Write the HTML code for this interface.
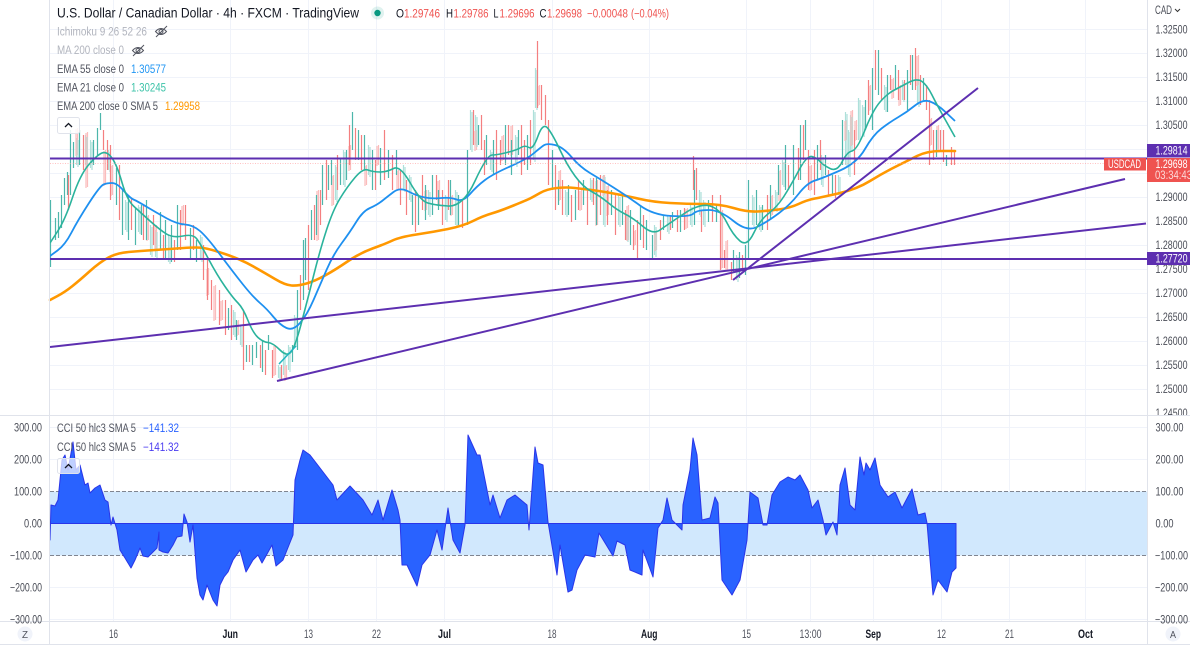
<!DOCTYPE html>
<html lang="en"><head><meta charset="utf-8"><title>USDCAD</title>
<style>
html,body{margin:0;padding:0;background:#fff}
svg{display:block}
text{font-family:"Liberation Sans",sans-serif;font-size:11.5px}
.a{fill:#4a4d57}
.t{fill:#222;text-anchor:middle}
.b{font-weight:bold;fill:#131722}
.l{fill:#50535e}
.g{fill:#b2b5be}
</style></head><body>
<svg width="1190" height="653" viewBox="0 0 1190 653" xmlns="http://www.w3.org/2000/svg">
<rect width="1190" height="653" fill="#fff"/>
<path stroke="#f0f3fa" fill="none" d="M50 29.5H1147M50 53.5H1147M50 77.5H1147M50 101.5H1147M50 125.5H1147M50 149.5H1147M50 173.5H1147M50 197.5H1147M50 221.5H1147M50 245.5H1147M50 269.5H1147M50 293.5H1147M50 317.5H1147M50 341.5H1147M50 365.5H1147M50 389.5H1147M50 427.5H1147M50 459.5H1147M50 587.5H1147M50 619.5H1147M113.5 0V622M230.5 0V622M308.5 0V622M376.5 0V622M444.5 0V622M552.5 0V622M649.5 0V622M746.5 0V622M810.5 0V622M873.5 0V622M941.5 0V622M1009.5 0V622M1085.5 0V622"/>
<rect x="50" y="491.5" width="1097" height="64" fill="#d1e8fd"/>
<path stroke="#808590" stroke-dasharray="4 2" d="M50 491.5H1147M50 555.5H1147"/>
<path id="cl" fill="none" stroke-width="1.2" stroke="#aee0da" d="M76.5 138V165M85.5 135V165M90.5 140V168M108.5 150V170M125.5 200V230M138.5 205V232M150.5 225V255M155.5 230V257M168.5 235V262M200.5 235V260M233.5 310V335M240.5 325V345M278.5 365V378M283.5 350V375M288.5 345V370M294.5 315V345M335.5 165V200M343.5 150V185M368.5 145V175M403.5 165V190M409.5 175V200M428.5 190V215M445.5 195V220M455.5 190V225M470.5 110V150M475.5 115V145M490.5 150V170M515.5 135V165M533.5 110V160M535.5 68V108M565.5 190V215M590.5 178V200M603.5 175V225M618.5 195V225M626.5 215V240M654.5 225V255M667.5 215V232M690.5 205V225M699.5 190V215M703.5 200V225M736.5 255V280M752.5 195V225M759.5 205V230M775.5 190V210M782.5 160V185M821.5 155V185M838.5 175V195M845.5 112V165M848.5 130V175M850.5 115V150M858.5 98V140M862.5 105V135M884.5 85V110M902.5 80V100M917.5 80V105"/>
<path id="cp" fill="none" stroke-width="1.2" stroke="#fbbcbc" d="M77.5 128V155M87.5 132V187M105.5 150V185M112.5 165V195M148.5 215V240M156.5 225V250M183.5 205V225M208.5 268V295M215.5 285V320M222.5 300V320M238.5 320V335M275.5 345V375M286.5 365V380M318.5 190V240M333.5 175V205M350.5 145V170M366.5 165V185M378.5 145V165M398.5 170V190M426.5 190V210M439.5 180V205M452.5 195V215M476.5 130V150M503.5 135V160M512.5 125V155M539.5 85V105M560.5 170V200M581.5 190V210M597.5 180V225M604.5 175V195M608.5 185V215M628.5 205V240M635.5 230V245M656.5 230V250M687.5 208V228M722.5 210V268M727.5 240V270M772.5 195V215M780.5 170V200M811.5 165V190M846.5 120V140M852.5 110V145M856.5 120V140M870.5 85V110M893.5 78V98M900.5 85V105M918.5 55V85M931.5 118V145M938.5 125V150"/>
<use href="#cl" transform="translate(1.5,2)"/><use href="#cp" transform="translate(-1.5,1)"/>
<path fill="none" stroke-width="1.2" stroke="#4db6ab" d="M50.5 200V267M55.5 218V240M58.5 212V238M61.5 195V228M64.5 178V205M67.5 172V195M70.5 130V195M73.5 142V168M79.5 130V165M93.5 140V165M97.5 128V155M100.5 113V130M116.5 168V205M122.5 190V235M128.5 195V240M135.5 208V245M141.5 205V235M146.5 200V240M160.5 212V250M165.5 220V258M171.5 225V262M177.5 205V250M190.5 228V258M196.5 240V262M228.5 308V330M236.5 320V340M246.5 345V362M252.5 345V365M256.5 342V358M262.5 340V372M268.5 335V350M292.5 345V362M297.5 290V350M303.5 240V300M305.5 238V280M311.5 210V240M316.5 195V235M322.5 165V205M328.5 165V190M331.5 160V185M340.5 158V185M346.5 150V180M352.5 112V150M358.5 130V160M364.5 135V170M372.5 150V190M380.5 148V185M388.5 150V178M396.5 150V175M412.5 195V225M418.5 195V225M425.5 185V220M432.5 175V215M438.5 190V210M450.5 180V215M458.5 195V225M467.5 150V225M478.5 125V145M486.5 135V165M493.5 140V175M505.5 125V165M511.5 140V175M518.5 130V155M527.5 135V170M552.5 150V190M558.5 180V205M568.5 185V215M575.5 190V220M583.5 180V205M596.5 178V225M611.5 190V215M622.5 195V225M630.5 210V245M640.5 205V240M646.5 220V250M652.5 235V258M663.5 215V230M672.5 212V228M680.5 210V232M694.5 170V225M708.5 200V222M716.5 205V222M733.5 250V272M739.5 252V278M745.5 245V275M748.5 180V260M756.5 190V225M762.5 205V230M770.5 185V220M778.5 165V195M785.5 145V190M793.5 145V195M800.5 125V180M805.5 120V150M817.5 145V180M825.5 155V175M832.5 175V195M842.5 120V165M865.5 100V130M872.5 68V130M878.5 50V95M887.5 75V112M895.5 65V90M907.5 70V110M912.5 55V90M923.5 78V100M936.5 130V157M946.5 155V166"/>
<path fill="none" stroke-width="1.2" stroke="#f47f80" d="M68.5 175V210M83.5 135V170M103.5 130V150M107.5 140V170M110.5 145V200M119.5 165V220M131.5 198V230M143.5 205V240M153.5 215V245M163.5 235V258M174.5 240V262M180.5 210V250M185.5 205V240M193.5 225V250M203.5 245V280M207.5 260V300M211.5 280V310M219.5 290V325M225.5 300V335M231.5 305V340M243.5 310V370M249.5 345V362M260.5 345V368M265.5 350V375M272.5 350V378M281.5 365V380M300.5 275V310M308.5 225V290M314.5 205V240M320.5 190V225M326.5 160V200M337.5 155V190M349.5 125V165M355.5 128V160M361.5 135V170M375.5 160V190M384.5 130V180M392.5 155V190M400.5 170V205M406.5 180V215M415.5 190V232M422.5 175V210M436.5 175V200M442.5 190V225M448.5 180V210M462.5 200V228M473.5 110V145M481.5 115V150M484.5 140V175M496.5 130V180M500.5 140V165M508.5 125V155M521.5 125V175M524.5 140V165M530.5 120V165M537.5 41V108M541.5 85V120M545.5 95V125M548.5 120V185M555.5 165V210M562.5 180V215M571.5 195V222M578.5 180V210M587.5 190V225M593.5 178V205M600.5 175V215M607.5 190V225M615.5 195V235M625.5 210V240M633.5 225V250M637.5 220V260M643.5 215V248M660.5 220V240M670.5 215V230M677.5 210V232M684.5 208V230M693.5 156V190M696.5 168V200M701.5 210V232M712.5 195V222M720.5 195V270M724.5 250V268M731.5 262V280M742.5 255V270M767.5 195V230M788.5 165V190M798.5 148V180M803.5 125V160M808.5 150V190M814.5 150V195M820.5 140V170M828.5 170V195M835.5 175V198M854.5 130V175M868.5 80V115M875.5 50V90M881.5 68V100M890.5 75V90M898.5 70V100M904.5 80V100M910.5 55V85M915.5 48V90M920.5 75V105M926.5 85V110M929.5 100V165M933.5 130V160M940.5 130V150M943.5 130V162M951.5 147V165M954.5 152V165"/>
<path fill="none" stroke="#ff9800" stroke-width="2.6" stroke-linecap="round" d="M50,300 L57.5,296 Q65,292 72.5,286 Q80,280 90,271 Q100,262 108.5,257.5 Q117,253 128.5,252 Q140,251 155,250 Q170,249 183.5,248 Q197,247 203.5,248 Q210,249 225,254 Q240,259 252.5,266 Q265,273 275,279 Q285,285 291.5,285.5 Q298,286 306.5,283.5 Q315,281 325,275.5 Q335,270 347.5,261.5 Q360,253 372.5,248.5 Q385,244 392.5,240.5 Q400,237 416.5,234.5 Q433,232 448,229 Q463,226 473,221 Q483,216 491.5,213.5 Q500,211 513.5,205.5 Q527,200 530,198.5 Q533,197 540,193 Q547,189 557,188 Q567,187 575,188 Q583,189 591.5,190 Q600,191 613.5,193.5 Q627,196 640,199 Q653,202 670,203 Q687,204 703.5,204 Q720,204 733.5,208 Q747,212 757,211.5 Q767,211 778.5,209.5 Q790,208 798.5,204 Q807,200 815,198.5 Q823,197 840,193 Q857,189 870,181 Q883,173 895,167 Q907,161 917,156 Q927,151 941,151 L955,151"/>
<path fill="none" stroke="#1e90f0" stroke-width="1.8" d="M50,256 L57.5,250.5 Q65,245 71.5,232.5 Q78,220 89,203 Q100,186 103.5,184.5 Q107,183 112,183 Q117,183 123.5,190.5 Q130,198 133.5,199.5 Q137,201 147,207 Q157,213 167,218.5 Q177,224 185,224.5 Q193,225 200,231 Q207,237 220,254.5 Q233,272 243,284.5 Q253,297 260,303 Q267,309 273.5,317 Q280,325 286.5,328 Q293,331 300,323 Q307,315 313.5,300 Q320,285 326.5,270 Q333,255 341.5,243.5 Q350,232 356.5,221.5 Q363,211 370,208 Q377,205 382,201 Q387,197 393.5,192 Q400,187 408.5,191.5 Q417,196 425,197.5 Q433,199 441.5,198 Q450,197 456.5,199.5 Q463,202 470,194 Q477,186 485,180 Q493,174 510,166.5 Q527,159 533.5,153.5 Q540,148 543.5,145.5 Q547,143 555,145 Q563,147 571.5,157 Q580,167 590,173 Q600,179 613.5,187.5 Q627,196 640,205.5 Q653,215 671.5,216 Q690,217 693.5,213.5 Q697,210 708.5,210 Q720,210 733.5,221 Q747,232 757,227 Q767,222 778.5,213.5 Q790,205 798.5,194 Q807,183 815,180.5 Q823,178 840,170.5 Q857,163 865,149 Q873,135 881.5,128.5 Q890,122 898.5,117 Q907,112 915,105.5 Q923,99 930,101.5 Q937,104 946,112.5 L955,121"/>
<path fill="none" stroke="#2ab39c" stroke-width="1.6" d="M50,243 L57.5,231.5 Q65,220 72.5,197.5 Q80,175 88.5,165 Q97,155 102,153 Q107,151 112,158 Q117,165 122,182.5 Q127,200 133.5,206 Q140,212 150,221 Q160,230 166.5,234 Q173,238 183,236 Q193,234 196.5,238.5 Q200,243 208.5,259 Q217,275 225,286.5 Q233,298 238,303 Q243,308 248,320.5 Q253,333 258,337.5 Q263,342 268,342.5 Q273,343 280,350 Q287,357 291,352 Q295,347 301,324.5 Q307,302 313.5,276 Q320,250 326.5,230 Q333,210 340,198.5 Q347,187 355,177.5 Q363,168 368,170 Q373,172 380,172 Q387,172 393.5,168.5 Q400,165 410,182.5 Q420,200 426.5,202.5 Q433,205 448,206 Q463,207 475,181 Q487,155 492,155 Q497,155 507,152.5 Q517,150 521,147.5 Q525,145 529,147.5 Q533,150 538,136 Q543,122 548,128.5 Q553,135 560,150 Q567,165 575,176 Q583,187 591.5,191.5 Q600,196 608.5,203 Q617,210 625,214 Q633,218 643,226.5 Q653,235 660,230 Q667,225 683.5,214 Q700,203 710,206 Q720,209 726.5,222 Q733,235 740,241 Q747,247 753.5,233.5 Q760,220 768.5,213.5 Q777,207 783.5,197 Q790,187 798.5,171 Q807,155 812,156.5 Q817,158 820,161.5 Q823,165 830,168.5 Q837,172 842,162 Q847,152 852,151 Q857,150 865,130 Q873,110 880,102 Q887,94 893.5,90.5 Q900,87 908.5,82.5 Q917,78 922,81.5 Q927,85 932,95 Q937,105 946,121 L955,137"/>
<path stroke="#5d2fb0" stroke-width="2" fill="none" d="M50 158.5H1147M50 259H1147"/>
<path stroke="#f99" stroke-dasharray="1 1.5" opacity=".6" fill="none" d="M50 163.5H1147"/>
<path stroke="#5d2fb0" stroke-width="2" fill="none" d="M50 347L1146 223.5M277 381L1125 179M733 280L978 88"/>
<path stroke="#1fb5c0" stroke-width="1.5" fill="none" d="M279 364L296 346"/>
<path fill="#2962ff" stroke="#2a35e8" stroke-width="1" stroke-linejoin="round" d="M50 523.5L50 540L51 505L55 506L58 500L62 460L65 455L68 470L73 442L76 470L80 465L85 485L88 483L90 493L95 488L100 485L105 500L108 502L111 525L113 517L117 530L120 550L125 558L131 568L135 560L140 548L143 556L148 557L153 552L157 548L159 532L159 550L163 552L168 553L173 545L177 537L182 536L184 514L187 522L190 542L193 525L197 578L200 595L203 600L207 585L213 600L217 606L220 585L224 577L228 572L233 560L240 550L246 572L253 560L258 555L262 563L272 545L276 566L283 560L293 535L295 480L300 460L303 450L310 455L320 468L333 485L337 500L350 486L363 500L372 515L378 500L383 520L392 490L398 510L400 520L402 565L407 565L417 586L422 565L430 555L437 530L442 550L448 508L453 540L460 553L465 525L468 435L477 455L480 455L490 505L493 495L500 518L507 500L515 495L527 505L529 530L535 447L538 463L543 465L548 522L557 575L560 545L568 592L572 590L577 570L585 555L595 557L599 533L613 556L617 541L625 545L630 570L642 575L643 550L653 577L658 528L663 520L667 498L672 520L682 530L683 505L690 470L693 438L697 455L702 520L710 518L715 497L718 503L722 580L732 595L740 580L747 540L750 492L758 498L763 525L767 525L772 495L780 482L788 477L795 480L800 475L808 490L812 508L818 500L823 520L826 535L833 522L837 535L840 485L845 468L850 505L855 510L860 457L864 475L866 463L870 470L875 458L880 485L888 497L895 492L902 508L912 489L918 515L925 513L927 523L933 595L938 580L947 592L952 572L956 568L956 523.5Z"/>
<path fill="none" stroke="#e0e3eb" d="M49.5 0V644.5M1147.5 0V644.5M0 415.5H1190M0 621.5H1190M0 644.5H1190"/>
<text x="57" y="17.5" style="font-size:13.5px;fill:#131722" textLength="302" lengthAdjust="spacingAndGlyphs">U.S. Dollar / Canadian Dollar · 4h · FXCM · TradingView</text>
<circle cx="377.5" cy="13" r="6.5" fill="#089981" opacity=".13"/><circle cx="377.5" cy="13" r="3.2" fill="#089981"/>
<g style="fill:#ef5350">
<text x="396" y="17.500" style="fill:#131722" textLength="8" lengthAdjust="spacingAndGlyphs">O</text><text x="404" y="17.500" textLength="36" lengthAdjust="spacingAndGlyphs">1.29746</text>
<text x="446" y="17.500" style="fill:#131722" textLength="7" lengthAdjust="spacingAndGlyphs">H</text><text x="453.500" y="17.500" textLength="35" lengthAdjust="spacingAndGlyphs">1.29786</text>
<text x="493.500" y="17.500" style="fill:#131722" textLength="5" lengthAdjust="spacingAndGlyphs">L</text><text x="499.500" y="17.500" textLength="35" lengthAdjust="spacingAndGlyphs">1.29696</text>
<text x="539.500" y="17.500" style="fill:#131722" textLength="7" lengthAdjust="spacingAndGlyphs">C</text><text x="547" y="17.500" textLength="35" lengthAdjust="spacingAndGlyphs">1.29698</text>
<text x="587" y="17.500" textLength="41" lengthAdjust="spacingAndGlyphs">−0.00048</text><text x="631" y="17.500" textLength="38" lengthAdjust="spacingAndGlyphs">(−0.04%)</text>
</g>
<text x="57" y="35.5" class="g" textLength="90" lengthAdjust="spacingAndGlyphs">Ichimoku 9 26 52 26</text>
<g fill="none" stroke="#50535e" stroke-width="1"><path d="M155.5 31.5Q161 25.5 166.5 31.5Q161 37.5 155.5 31.5Z"/><circle cx="161" cy="31.5" r="2"/><path d="M156 37L167 26"/></g>
<text x="57" y="54" class="g" textLength="67" lengthAdjust="spacingAndGlyphs">MA 200 close 0</text>
<g fill="none" stroke="#50535e" stroke-width="1"><path d="M132.5 50.5Q138 44.5 143.5 50.5Q138 56.5 132.5 50.5Z"/><circle cx="138" cy="50.5" r="2"/><path d="M133 56L144 45"/></g>
<text x="57" y="73" class="l" textLength="67" lengthAdjust="spacingAndGlyphs">EMA 55 close 0</text><text x="131" y="73" style="fill:#2196f3" textLength="35" lengthAdjust="spacingAndGlyphs">1.30577</text>
<text x="57" y="91.5" class="l" textLength="67" lengthAdjust="spacingAndGlyphs">EMA 21 close 0</text><text x="131" y="91.5" style="fill:#3cc3a8" textLength="35" lengthAdjust="spacingAndGlyphs">1.30245</text>
<text x="57" y="110" class="l" textLength="101" lengthAdjust="spacingAndGlyphs">EMA 200 close 0 SMA 5</text><text x="165" y="110" style="fill:#ff9800" textLength="35" lengthAdjust="spacingAndGlyphs">1.29958</text>
<rect x="57.5" y="117.5" width="22" height="16" rx="2" fill="#fff" fill-opacity=".85" stroke="#e0e3eb"/>
<path d="M65 127L68.5 123.5L72 127" fill="none" stroke="#131722" stroke-width="1.3"/>
<text x="57" y="432" class="l" textLength="79" lengthAdjust="spacingAndGlyphs">CCI 50 hlc3 SMA 5</text><text x="143" y="432" style="fill:#2962ff" textLength="36" lengthAdjust="spacingAndGlyphs">−141.32</text>
<text x="57" y="451" class="l" textLength="79" lengthAdjust="spacingAndGlyphs">CCI 50 hlc3 SMA 5</text><text x="143" y="451" style="fill:#4a3cf0" textLength="36" lengthAdjust="spacingAndGlyphs">−141.32</text>
<rect x="57.5" y="458.5" width="22" height="15" rx="2" fill="#fff" fill-opacity=".7" stroke="#e0e3eb"/>
<path d="M65 468L68.5 464.5L72 468" fill="none" stroke="#131722" stroke-width="1.3"/>
<text x="14" y="431.5" class="a" textLength="28" lengthAdjust="spacingAndGlyphs">300.00</text><text x="14" y="463.5" class="a" textLength="28" lengthAdjust="spacingAndGlyphs">200.00</text><text x="14" y="495.5" class="a" textLength="28" lengthAdjust="spacingAndGlyphs">100.00</text><text x="24" y="527.5" class="a" textLength="18" lengthAdjust="spacingAndGlyphs">0.00</text><text x="10" y="559.5" class="a" textLength="32" lengthAdjust="spacingAndGlyphs">−100.00</text><text x="10" y="591.5" class="a" textLength="32" lengthAdjust="spacingAndGlyphs">−200.00</text><text x="10" y="623.5" class="a" textLength="32" lengthAdjust="spacingAndGlyphs">−300.00</text>
<g>
<text x="1155" y="14" class="a" textLength="17" lengthAdjust="spacingAndGlyphs">CAD</text><path d="M1175 9L1177.5 11.5L1180 9" fill="none" stroke="#333" stroke-width="1"/>
<text x="1155.5" y="33.5" class="a" textLength="32" lengthAdjust="spacingAndGlyphs">1.32500</text><text x="1155.5" y="57" class="a" textLength="32" lengthAdjust="spacingAndGlyphs">1.32000</text><text x="1155.5" y="81" class="a" textLength="32" lengthAdjust="spacingAndGlyphs">1.31500</text><text x="1155.5" y="105" class="a" textLength="32" lengthAdjust="spacingAndGlyphs">1.31000</text><text x="1155.5" y="129" class="a" textLength="32" lengthAdjust="spacingAndGlyphs">1.30500</text><text x="1155.5" y="201" class="a" textLength="32" lengthAdjust="spacingAndGlyphs">1.29000</text><text x="1155.5" y="225" class="a" textLength="32" lengthAdjust="spacingAndGlyphs">1.28500</text><text x="1155.5" y="249" class="a" textLength="32" lengthAdjust="spacingAndGlyphs">1.28000</text><text x="1155.5" y="273" class="a" textLength="32" lengthAdjust="spacingAndGlyphs">1.27500</text><text x="1155.5" y="297" class="a" textLength="32" lengthAdjust="spacingAndGlyphs">1.27000</text><text x="1155.5" y="321" class="a" textLength="32" lengthAdjust="spacingAndGlyphs">1.26500</text><text x="1155.5" y="345" class="a" textLength="32" lengthAdjust="spacingAndGlyphs">1.26000</text><text x="1155.5" y="369" class="a" textLength="32" lengthAdjust="spacingAndGlyphs">1.25500</text><text x="1155.5" y="393" class="a" textLength="32" lengthAdjust="spacingAndGlyphs">1.25000</text><text x="1155.5" y="417" class="a" textLength="32" lengthAdjust="spacingAndGlyphs">1.24500</text>
<rect x="1148" y="415.5" width="42" height="6" fill="#fff"/><path d="M1148 415.5H1190" stroke="#e0e3eb"/>
<text x="1155.5" y="431.5" class="a" textLength="28" lengthAdjust="spacingAndGlyphs">300.00</text><text x="1155.5" y="463.5" class="a" textLength="28" lengthAdjust="spacingAndGlyphs">200.00</text><text x="1155.5" y="495.5" class="a" textLength="28" lengthAdjust="spacingAndGlyphs">100.00</text><text x="1155.5" y="527.5" class="a" textLength="18" lengthAdjust="spacingAndGlyphs">0.00</text><text x="1155" y="559.5" class="a" textLength="33" lengthAdjust="spacingAndGlyphs">−100.00</text><text x="1155" y="591.5" class="a" textLength="33" lengthAdjust="spacingAndGlyphs">−200.00</text><text x="1155" y="623.5" class="a" textLength="33" lengthAdjust="spacingAndGlyphs">−300.00</text>
</g>
<rect x="1147" y="144" width="43" height="13.5" fill="#5d2fb0"/><text x="1155.5" y="154.5" class="a" style="fill:#fff" textLength="32" lengthAdjust="spacingAndGlyphs">1.29814</text>
<rect x="1147" y="252" width="43" height="13" fill="#5d2fb0"/><text x="1155.5" y="262.5" class="a" style="fill:#fff" textLength="32" lengthAdjust="spacingAndGlyphs">1.27720</text>
<rect x="1147" y="158" width="43" height="24" fill="#ef5350"/><text x="1155.5" y="168" class="a" style="fill:#fff" textLength="32" lengthAdjust="spacingAndGlyphs">1.29698</text><text x="1155" y="179" class="a" style="fill:#fcd9d8" textLength="37" lengthAdjust="spacingAndGlyphs">03:34:43</text>
<rect x="1104" y="158" width="42" height="12.5" fill="#ef5350"/><text x="1108" y="168" style="fill:#fff" textLength="33" lengthAdjust="spacingAndGlyphs">USDCAD</text>
<circle cx="25" cy="634" r="7.5" fill="#f0f3fa"/><text x="22" y="638" style="fill:#50535e;font-size:10px" textLength="6" lengthAdjust="spacingAndGlyphs">Z</text>
<circle cx="1173" cy="634" r="7.5" fill="#f0f3fa"/><text x="1170" y="638" style="fill:#50535e;font-size:10px" textLength="6" lengthAdjust="spacingAndGlyphs">A</text>
<text x="109" y="638" class="l" textLength="9" lengthAdjust="spacingAndGlyphs">16</text><text x="222.500" y="638" class="b" textLength="15.500" lengthAdjust="spacingAndGlyphs">Jun</text><text x="304" y="638" class="l" textLength="9" lengthAdjust="spacingAndGlyphs">13</text><text x="372" y="638" class="l" textLength="9" lengthAdjust="spacingAndGlyphs">22</text><text x="438" y="638" class="b" textLength="13" lengthAdjust="spacingAndGlyphs">Jul</text><text x="547.500" y="638" class="l" textLength="9" lengthAdjust="spacingAndGlyphs">18</text><text x="641" y="638" class="b" textLength="16.500" lengthAdjust="spacingAndGlyphs">Aug</text><text x="742" y="638" class="l" textLength="9" lengthAdjust="spacingAndGlyphs">15</text><text x="799.500" y="638" class="l" textLength="22" lengthAdjust="spacingAndGlyphs">13:00</text><text x="865.500" y="638" class="b" textLength="15.500" lengthAdjust="spacingAndGlyphs">Sep</text><text x="937" y="638" class="l" textLength="9" lengthAdjust="spacingAndGlyphs">12</text><text x="1005" y="638" class="l" textLength="9" lengthAdjust="spacingAndGlyphs">21</text><text x="1078" y="638" class="b" textLength="15" lengthAdjust="spacingAndGlyphs">Oct</text>
</svg>
</body></html>
